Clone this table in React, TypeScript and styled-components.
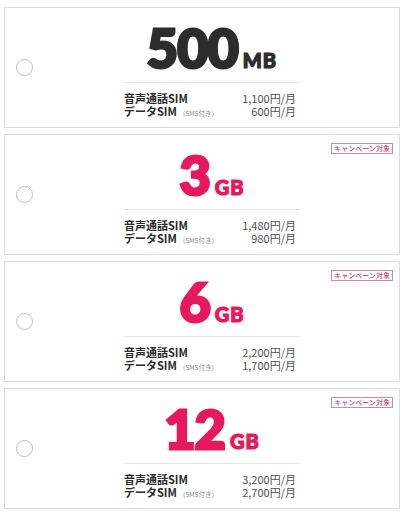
import React from "react";
import styled, { createGlobalStyle } from "styled-components";

const Global = createGlobalStyle`
  html, body { margin: 0; padding: 0; background: #fff; }
  body { font-family: "Noto Sans CJK JP", "Noto Sans", sans-serif; }
`;

const Page = styled.div`
  display: flex;
  flex-direction: column;
  gap: 6px;
  padding: 7px 4px 0 4px;
  width: 396px;
`;

const Card = styled.div`
  position: relative;
  box-sizing: border-box;
  height: 121px;
  border: 1px solid #dcdcdc;
  background: #fff;
  display: grid;
  grid-template-columns: 119px 176px 1fr;
  align-items: center;
`;

const RadioCell = styled.div`
  display: flex;
  align-items: center;
  padding-left: 11px;
`;

const Radio = styled.span`
  box-sizing: border-box;
  width: 17px;
  height: 17px;
  border-radius: 50%;
  border: 1px solid #bdbdbd;
  background: #fff;
`;

const Content = styled.div`
  display: flex;
  flex-direction: column;
  align-items: stretch;
`;

const Capacity = styled.div<{ $pink: boolean }>`
  display: flex;
  justify-content: center;
  align-items: baseline;
  gap: 5px;
  height: 52px;
  margin-top: 4px;
  color: ${(p) => (p.$pink ? "#e6195e" : "#2d2d2d")};
  -webkit-text-stroke-color: ${(p) => (p.$pink ? "#e6195e" : "#2d2d2d")};
  font-family: "Lato", "Open Sans", sans-serif;
  font-weight: 900;
`;

const Num = styled.span`
  font-size: 54px;
  line-height: 52px;
  letter-spacing: -1px;
  -webkit-text-stroke-width: 3px;
`;

const Unit = styled.span`
  font-size: 20px;
  line-height: 20px;
  letter-spacing: 1px;
  -webkit-text-stroke-width: 1.2px;
`;

const Divider = styled.div`
  height: 0;
  border-top: 1px solid #e6e6e6;
  margin: 8px 0 9px 0;
`;

const Rows = styled.div`
  display: flex;
  flex-direction: column;
  padding-right: 4px;
`;

const Row = styled.div`
  display: flex;
  justify-content: space-between;
  align-items: center;
  height: 13px;
`;

const Label = styled.span`
  display: block;
  height: 13px;
  line-height: 13px;
  font-family: "Noto Sans CJK JP", "Noto Sans", sans-serif;
  font-size: 11px;
  font-weight: 700;
  color: #2a2a2a;
  white-space: nowrap;
`;

const Note = styled.span`
  font-size: 6.5px;
  font-weight: 400;
  color: #888;
  margin-left: 2px;
`;

const Price = styled.span`
  display: block;
  height: 13px;
  line-height: 13px;
  font-family: "Noto Sans CJK JP", "Noto Sans", sans-serif;
  font-size: 11px;
  font-weight: 400;
  color: #505050;
  white-space: nowrap;
`;

const Badge = styled.span`
  position: absolute;
  top: 8px;
  right: 6px;
  box-sizing: border-box;
  height: 11px;
  padding: 0 2px;
  border: 1px solid #c98aa3;
  font-family: "Noto Sans CJK JP", sans-serif;
  font-size: 7px;
  line-height: 9px;
  color: #c0285e;
  background: #fff;
  white-space: nowrap;
`;

type Plan = {
  num: string;
  unit: string;
  voice: string;
  data: string;
  campaign: boolean;
};

const plans: Plan[] = [
  { num: "500", unit: "MB", voice: "1,100円/月", data: "600円/月", campaign: false },
  { num: "3", unit: "GB", voice: "1,480円/月", data: "980円/月", campaign: true },
  { num: "6", unit: "GB", voice: "2,200円/月", data: "1,700円/月", campaign: true },
  { num: "12", unit: "GB", voice: "3,200円/月", data: "2,700円/月", campaign: true },
];

export default function App() {
  return (
    <>
      <Global />
      <Page>
        {plans.map((p) => (
          <Card key={p.num}>
            <RadioCell>
              <Radio />
            </RadioCell>
            <Content>
              <Capacity $pink={p.campaign}>
                <Num>{p.num}</Num>
                <Unit>{p.unit}</Unit>
              </Capacity>
              <Divider />
              <Rows>
                <Row>
                  <Label>音声通話SIM</Label>
                  <Price>{p.voice}</Price>
                </Row>
                <Row>
                  <Label>
                    データSIM<Note>（SMS付き）</Note>
                  </Label>
                  <Price>{p.data}</Price>
                </Row>
              </Rows>
            </Content>
            <div />
            {p.campaign && <Badge>キャンペーン対象</Badge>}
          </Card>
        ))}
      </Page>
    </>
  );
}
